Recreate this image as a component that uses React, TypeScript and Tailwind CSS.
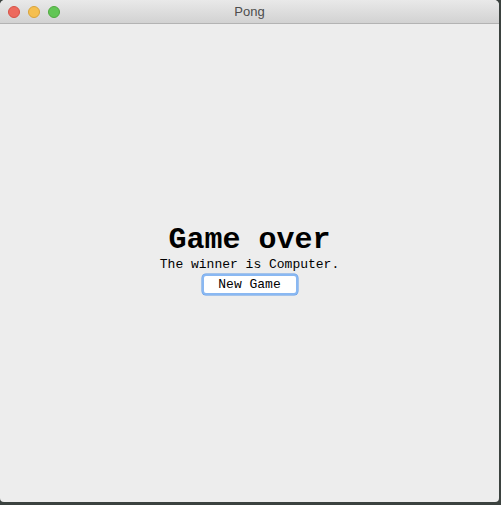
import React from 'react';

const TrafficLight: React.FC<{ fill: string; ring: string }> = ({ fill, ring }) => (
  <span
    className="block w-[12px] h-[12px] rounded-full border-[0.5px]"
    style={{ backgroundColor: fill, borderColor: ring }}
  />
);

export default function App() {
  return (
    <div className="w-[501px] h-[505px] bg-[#3b423f] overflow-hidden">
      <div className="w-[499px] h-[502px] rounded-t-[5px] rounded-b-[4px] overflow-hidden flex flex-col bg-[#ededed]">
        <div className="relative h-[24px] shrink-0 bg-gradient-to-b from-[#e9e9e9] to-[#d2d2d2] border-b border-[#b3b3b3] flex items-center">
          <div className="flex items-center gap-[8px] pl-[8px]">
            <TrafficLight fill="#ed6a5e" ring="#d65246" />
            <TrafficLight fill="#f5bf4f" ring="#d9a33a" />
            <TrafficLight fill="#62c655" ring="#4fa93f" />
          </div>
          <div className="absolute inset-0 flex items-center justify-center text-[13px] text-[#4d4d4d] font-['Liberation_Sans',Arial,sans-serif]">
            Pong
          </div>
        </div>

        <div className="flex-1 pb-[8px] flex flex-col items-center justify-center font-['Liberation_Mono','Courier_New',monospace] text-black">
          <h1 className="text-[30px] font-bold leading-[34px]">Game over</h1>
          <p className="text-[13px] leading-[15px]">The winner is Computer.</p>
          <button
            type="button"
            className="mt-[2px] w-[96px] h-[21px] bg-white rounded-[4px] border-2 border-[#8ab8f2] shadow-[0_0_0_0.5px_#5d9ae8] text-[13px] leading-none"
          >
            New Game
          </button>
        </div>
      </div>
    </div>
  );
}
